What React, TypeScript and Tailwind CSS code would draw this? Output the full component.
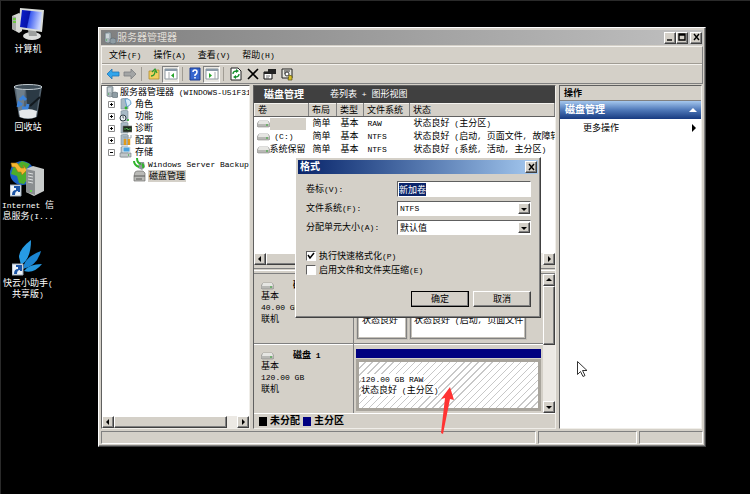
import type { ReactNode } from "react";

const raised =
  "border border-t-white border-l-white border-r-[#404040] border-b-[#404040] bg-[#d4d0c8] shadow-[inset_-1px_-1px_0_#808080]";
const sunken =
  "border border-t-[#606060] border-l-[#606060] border-r-[#f0eee9] border-b-[#f0eee9]";

function Mono({ children }: { children: ReactNode }) {
  return <span className="font-['Liberation_Mono','Noto_Sans_CJK_SC',monospace] text-[8px]">{children}</span>;
}

// Latin runs are set in the narrower mono face, Chinese runs keep the page font
function Mixed({ text }: { text: string }) {
  return text
    .split(/([\x20-\x7e]+)/)
    .filter(Boolean)
    .map((part, i) => (/^[\x20-\x7e]/.test(part) ? <Mono key={i}>{part}</Mono> : part));
}

function ComputerIcon() {
  return (
    <svg width="36" height="34" viewBox="0 0 36 34">
      <defs>
        <linearGradient id="screen" x1="0" y1="0" x2="1" y2="0.2">
          <stop offset="0" stopColor="#0a1fd0" />
          <stop offset="0.45" stopColor="#0714a8" />
          <stop offset="0.5" stopColor="#3c5cf0" />
          <stop offset="1" stopColor="#c8d4ff" />
        </linearGradient>
      </defs>
      <path d="M2 8l7-3 3 2v16l-3 2-7-4z" fill="#d8dad6" />
      <path d="M2 8l4 1v14l-4-2z" fill="#a8aaa8" />
      <path d="M3 11h3M3 14h3" stroke="#59d020" strokeWidth="1.5" />
      <ellipse cx="22" cy="28" rx="9" ry="4" fill="#dcdedc" />
      <path d="M18 22h8l1 6h-8z" fill="#9da09e" />
      <path d="M10 0l24 2-2 22-23-3z" fill="#d9dcd8" />
      <path d="M12 2l20 2-2 18-20-3z" fill="url(#screen)" />
    </svg>
  );
}

function BinIcon() {
  return (
    <svg width="30" height="36" viewBox="0 0 30 36">
      <path d="M1 3h28l-5 30q-9 4-18 0z" fill="#53626e" />
      <path d="M3 5h9L10 32l-4-1z" fill="#8b9ba8" opacity="0.5" />
      <path d="M13 5h14l-4 26-8 2z" fill="#2b3a45" />
      <path d="M6 27q8-4 18 0l-1 6q-8 3-16 0z" fill="#e5e8ea" />
      <ellipse cx="15" cy="3" rx="14" ry="2.5" fill="#3d4c57" stroke="#c4cdd2" />
      <path d="M7 16l3-3 3 3M5 23l1-4 3 2M9 24h5l1-4" fill="none" stroke="#3c83da" strokeWidth="3" />
      <path d="M17 22l10-9" stroke="#12191e" strokeWidth="2" />
    </svg>
  );
}

function ShortcutBadge({ y }: { y: number }) {
  return (
    <g transform={`translate(0 ${y})`}>
      <path d="M0 0h11v11H0z" fill="#edf3fa" stroke="#9aa8b8" />
      <path d="M2 10q0-5 4-5V3H4V1h6v6H8V6q-3 0-3 4z" fill="#1c55a7" />
    </g>
  );
}

function InternetIcon() {
  return (
    <svg width="36" height="38" viewBox="0 0 36 38">
      <circle cx="12" cy="13" r="12" fill="#1c61c4" />
      <path d="M3 8l9-7 8 3-4 6 4 5-6 9-5-1-2-7-6-2z" fill="#4cae2b" />
      <path d="M1 3h6l4 5h3l-1-3 4 5-5 5-1-3H8L5 7H2z" fill="#f5b62f" stroke="#a47215" strokeWidth="0.6" />
      <path d="M16 9l7-3 11 3v22l-10 5-8-4z" fill="#c8cbca" />
      <path d="M16 9l9 2v24l-9-3z" fill="#8a8e90" />
      <path d="M18 13l5 1M18 16l5 1M18 19l5 1M18 22l5 1" stroke="#dadddd" />
      <circle cx="21" cy="31" r="1" fill="#5ce33a" />
      <ShortcutBadge y={25} />
    </svg>
  );
}

function CloudHelperIcon() {
  return (
    <svg width="32" height="36" viewBox="0 0 32 36">
      <path d="M19 0Q7 9 7 17l2 8q10-6 10-25z" fill="#279be4" />
      <path d="M29 11Q12 17 11 29q14-3 18-18z" fill="#1b85d2" />
      <path d="M30 24q-13 0-18 7 10 3 18-7z" fill="#2698df" />
      <ShortcutBadge y={24} />
    </svg>
  );
}

function ServerIcon() {
  return (
    <svg width="12" height="12" viewBox="0 0 12 12" className="shrink-0">
      <path d="M1 1l4-1 2 1v9l-3 1-3-1z" fill="#a9b5bb" stroke="#65737a" strokeWidth="0.6" />
      <path d="M2 3h3M2 5h3" stroke="#eef3f5" />
      <path d="M6 7l3-1 3 1v4l-3 1-3-1z" fill="#8e9ca4" stroke="#5b6870" strokeWidth="0.6" />
      <path d="M2 8h1" stroke="#38b838" />
    </svg>
  );
}

function TreeIcon({ kind }: { kind: string }) {
  return (
    <svg width="13" height="12" viewBox="0 0 13 12" className="shrink-0">
      {kind !== "disk" && kind !== "backup" && (
        <path d="M2 1l5-1 2 1v10H2z" fill="#a8bac6" stroke="#7b8a94" strokeWidth="0.6" />
      )}
      {kind === "role" && (
        <>
          <path d="M6 1q6-1 6 5l-4 3z" fill="#d8ebf8" stroke="#4a8fc4" strokeWidth="0.8" />
          <circle cx="7" cy="10" r="1.4" fill="#2fb52f" />
        </>
      )}
      {kind === "feature" && (
        <>
          <circle cx="4" cy="8" r="3" fill="#e9eef2" stroke="#303c44" />
          <path d="M4 6v2h1" stroke="#303c44" fill="none" strokeWidth="0.7" />
          <circle cx="9" cy="10" r="1" fill="#2fb52f" />
        </>
      )}
      {kind === "diag" && (
        <>
          <path d="M4 4h9v6H4z" fill="#1e2b1e" stroke="#777" strokeWidth="0.6" />
          <path d="M5 7h2l1-1 1 2 1-1h2" fill="none" stroke="#5dd55d" strokeWidth="0.7" />
        </>
      )}
      {kind === "config" && (
        <>
          <path d="M6 5v6M10 5v6" stroke="#e39a18" strokeWidth="2.4" />
          <path d="M5 2v2h2V2M9 1v3h3V1" fill="none" stroke="#9aa4aa" />
        </>
      )}
      {kind === "storage" && (
        <>
          <path d="M4 1h7v5H4z" fill="#49a1dd" stroke="#dfe6ea" />
          <path d="M1 7h11v4H1z" fill="#c1c7ca" stroke="#747d82" strokeWidth="0.6" />
          <path d="M9 9h1" stroke="#21a421" />
        </>
      )}
      {kind === "backup" && (
        <>
          <path d="M6 4h5l1 5-3 3-4-2z" fill="#8f9799" />
          <path d="M1 3q0 4 5 6M4 0q0 5 4 6M9 6q2 1 1 4" fill="none" stroke="#30b52b" strokeWidth="2" />
        </>
      )}
      {kind === "disk" && (
        <>
          <path d="M2 2l2-1h6l2 2v8H1V6z" fill="#b9b9b6" stroke="#70706e" strokeWidth="0.7" />
          <path d="M1 6h11M3 9h6" stroke="#5d5d5b" />
        </>
      )}
    </svg>
  );
}

function DriveIcon() {
  return (
    <svg width="13" height="8" viewBox="0 0 13 8" className="inline-block shrink-0">
      <path d="M2 1h9l2 3v2l-1 1H1L0 6V4z" fill="#b8b8b5" stroke="#8a8a88" strokeWidth="0.6" />
      <path d="M2 1h9l1 3H1z" fill="#e6e6e3" />
      <path d="M9 5h2" stroke="#2da52d" />
    </svg>
  );
}

function DesktopIcon({ icon, children }: { icon: ReactNode; children: ReactNode }) {
  return (
    <a href="#" className="flex h-[78px] w-[54px] flex-col items-center text-center leading-[10px] text-white">
      <span className="flex h-[35px] items-end">{icon}</span>
      <span className="mt-[2px] whitespace-nowrap">{children}</span>
    </a>
  );
}

function ToolButton({ label, pressed, children }: { label: string; pressed?: boolean; children: ReactNode }) {
  return (
    <button
      aria-label={label}
      className={
        pressed
          ? "flex h-[17px] w-[17px] items-center justify-center border border-t-[#808080] border-l-[#808080] border-r-white border-b-white bg-[#eae8e3]"
          : "flex h-[17px] w-[17px] items-center justify-center"
      }
    >
      <svg width="14" height="14" viewBox="0 0 14 14">{children}</svg>
    </button>
  );
}

function Separator() {
  return <span className="mx-[3px] h-3.5 w-px bg-[#a09c94]" />;
}

function Toolbar() {
  return (
    <div className="flex h-[19px] items-center border-t border-t-[#f4f2ee] pl-[2px]">
      <ToolButton label="后退">
        <path d="M1 7l5-5v3h7v4H6v3z" fill="#30a5ec" stroke="#2174b4" strokeWidth="0.8" />
      </ToolButton>
      <ToolButton label="前进">
        <path d="M13 7L8 2v3H1v4h7v3z" fill="#a3a5a5" stroke="#7c7f80" strokeWidth="0.8" />
      </ToolButton>
      <Separator />
      <ToolButton label="上一级">
        <path d="M2 4h4l1-1h5v9H2z" fill="#f1cf61" stroke="#b18d2d" strokeWidth="0.8" />
        <path d="M4 9q4 0 4-5M5 5l3-3 2 4" fill="none" stroke="#2d9a30" strokeWidth="1.3" />
      </ToolButton>
      <ToolButton label="显示控制台树" pressed>
        <path d="M1 2h12v10H1z" fill="#fff" stroke="#8d98a0" />
        <path d="M1 3h12" stroke="#8999a8" strokeWidth="2" />
        <path d="M5 5v7" stroke="#a6acaf" />
        <path d="M10 6v5L7 8.5z" fill="#27a52b" />
      </ToolButton>
      <Separator />
      <ToolButton label="帮助">
        <path d="M2 1h10v12H2z" fill="#3566cf" stroke="#1e3d8f" />
        <path d="M5 5q0-2 2-2t2 2-2 3v1M7 10v1.5" fill="none" stroke="#fff" strokeWidth="1.5" />
      </ToolButton>
      <ToolButton label="显示操作窗格" pressed>
        <path d="M1 2h12v10H1z" fill="#fff" stroke="#8d98a0" />
        <path d="M1 3h12" stroke="#8999a8" strokeWidth="2" />
        <path d="M10 5v7" stroke="#a6acaf" />
        <path d="M4 6v5l3-2.5z" fill="#27a52b" />
      </ToolButton>
      <Separator />
      <ToolButton label="刷新">
        <path d="M2 1h7l3 3v9H2z" fill="#fff" stroke="#222" />
        <path d="M4 7q0-3 4-3M10 7q0 3-4 3" fill="none" stroke="#138d2b" strokeWidth="1.3" />
        <path d="M7 2l3 2-3 2zM7 8l-3 2 3 2z" fill="#138d2b" />
      </ToolButton>
      <ToolButton label="删除">
        <path d="M2 2l10 10M12 2L2 12" stroke="#000" strokeWidth="1.6" />
      </ToolButton>
      <ToolButton label="属性">
        <path d="M1 5h8v7H1z" fill="#fff" stroke="#111" />
        <path d="M1 5h8v2H1zM5 2h8v5H9V5H5z" fill="#222" />
        <path d="M3 9h4M3 11h3" stroke="#555" strokeWidth="0.8" />
      </ToolButton>
      <ToolButton label="帮助主题">
        <path d="M2 2h10v9H2z" fill="#e7e7df" stroke="#222" />
        <path d="M4 4h6M4 6h2" stroke="#333" />
        <circle cx="7" cy="7" r="2" fill="#fff" stroke="#333" />
        <path d="M9 8l3 1v4H8z" fill="#d8be28" stroke="#57500e" strokeWidth="0.7" />
      </ToolButton>
    </div>
  );
}

const treeItems = [
  { kind: "role", label: "角色" },
  { kind: "feature", label: "功能" },
  { kind: "diag", label: "诊断" },
  { kind: "config", label: "配置" },
  { kind: "storage", label: "存储", open: true },
];

function TreePane() {
  return (
    <nav className={`flex w-[149px] shrink-0 flex-col overflow-hidden bg-white ${sunken}`}>
      <ul className="flex-1 whitespace-nowrap leading-[12px]">
        <li className="flex h-3 items-center gap-[2px] pl-1">
          <ServerIcon />
          <span>
            <Mixed text="服务器管理器 (WINDOWS-U51F31" />
          </span>
        </li>
        {treeItems.map((item) => (
          <li key={item.kind} className="flex h-3 items-center pl-[6px]">
            <svg width="7" height="7" viewBox="0 0 7 7" className="mr-1">
              <path d="M0.5 0.5h6v6h-6z" fill="#fff" stroke="#8c8c8c" />
              <path d={item.open ? "M2 3.5h3" : "M2 3.5h3M3.5 2v3"} stroke="#000" />
            </svg>
            <TreeIcon kind={item.kind} />
            <span className="ml-[3px]">{item.label}</span>
          </li>
        ))}
        <li className="flex h-3 items-center pl-[31px]">
          <TreeIcon kind="backup" />
          <span className="ml-[2px] leading-[12px]"><Mono>Windows Server Backup</Mono></span>
        </li>
        <li className="flex h-3 items-center pl-[31px]">
          <TreeIcon kind="disk" />
          <span className="ml-[2px] bg-[#d4d0c8] px-px">磁盘管理</span>
        </li>
      </ul>
      <div className="flex h-3 bg-[#ece9e4]">
        <ScrollButton dir="left" />
        <div className={`w-[113px] ${raised}`} />
        <span className="flex-1" />
        <ScrollButton dir="right" />
      </div>
    </nav>
  );
}

const arrows = {
  left: "M5 1v6L2 4z",
  right: "M3 1v6l3-3z",
  up: "M1 5h6L4 2z",
  down: "M1 3h6L4 6z",
};

function ScrollButton({ dir }: { dir: keyof typeof arrows }) {
  return (
    <button aria-label={dir} className={`flex h-3 w-3 shrink-0 items-center justify-center ${raised}`}>
      <svg width="8" height="8" viewBox="0 0 8 8"><path d={arrows[dir]} /></svg>
    </button>
  );
}

const volumes = [
  { name: "", fs: "RAW", status: "状态良好 (主分区)" },
  { name: " (C:)", fs: "NTFS", status: "状态良好 (启动, 页面文件, 故障转" },
  { name: "系统保留", fs: "NTFS", status: "状态良好 (系统, 活动, 主分区)" },
];

function VolumeList() {
  return (
    <div className="flex h-[162px] flex-col overflow-hidden bg-white">
      <div className="flex-1 overflow-hidden">
        <table className="w-full table-fixed border-collapse whitespace-nowrap text-left">
          <colgroup>
            <col className="w-[54px]" />
            <col className="w-[28px]" />
            <col className="w-[27px]" />
            <col className="w-[46px]" />
            <col />
          </colgroup>
          <thead>
            <tr className="h-[13px] bg-[#d4d0c8] leading-[11px]">
              {["卷", "布局", "类型", "文件系统", "状态"].map((h) => (
                <th key={h} className="border border-t-[#f4f2ee] border-l-[#f4f2ee] border-r-[#808080] border-b-[#606060] p-0 pl-[3px] font-normal">
                  {h}
                </th>
              ))}
            </tr>
          </thead>
          <tbody>
            {volumes.map((v) => (
              <tr key={v.status} className="h-[13px] leading-[13px]">
                <td className="p-0 pl-[2px]">
                  <div className="flex items-center whitespace-pre">
                    <DriveIcon />
                    {v.name ? <span><Mixed text={v.name} /></span> : <span className="h-3 w-9 bg-[#d4d0c8]" />}
                  </div>
                </td>
                <td className="p-0 pl-1">简单</td>
                <td className="p-0 pl-1">基本</td>
                <td className="p-0 pl-1"><Mono>{v.fs}</Mono></td>
                <td className="overflow-hidden p-0 pl-1"><Mixed text={v.status} /></td>
              </tr>
            ))}
          </tbody>
        </table>
      </div>
      <div className="flex h-3 bg-[#ece9e4]">
        <ScrollButton dir="left" />
        <div className={`w-[200px] ${raised}`} />
        <span className="flex-1" />
        <ScrollButton dir="right" />
      </div>
    </div>
  );
}

function DiskInfo({ index, size }: { index: number; size: string }) {
  return (
    <div className="flex w-[100px] shrink-0 flex-col border-r border-r-[#808080] pt-[6px] pl-[7px] leading-[11px]">
      <div className="flex items-center gap-[19px] font-bold">
        <DriveIcon />
        <span><Mixed text={`磁盘 ${index}`} /></span>
      </div>
      <span>基本</span>
      <Mono>{size}</Mono>
      <span className="mt-px">联机</span>
    </div>
  );
}

function DiskMap() {
  const partition =
    "overflow-hidden border-[3px] border-[#c4c0b8] bg-white pt-3 leading-[11px] whitespace-nowrap outline outline-[#808080] -outline-offset-2";
  return (
    <div className="flex min-h-0 flex-1 flex-col border-t border-t-[#808080]">
      <div className="flex min-h-0 flex-1">
        <div className="min-w-0 flex-1">
          <div className="flex h-[70px] border-b border-b-[#808080] shadow-[0_1px_0_#fff]">
            <DiskInfo index={0} size="40.00 GB" />
            <div className="flex min-w-0 flex-1 flex-col px-[2px] pt-1 pb-[3px]">
              <div className="mr-[14px] h-[9px] bg-[#000080]" />
              <div className="mr-[14px] flex flex-1 gap-px pt-[2px]">
                <div className={`w-[52px] shrink-0 pl-[3px] ${partition}`}>
                  <Mono>100 MB</Mono>
                  <br />
                  状态良好
                </div>
                <div className={`min-w-0 flex-1 pl-[2px] ${partition}`}>
                  <Mono>39.90 GB NTFS</Mono>
                  <br />
                  <Mixed text="状态良好 (启动, 页面文件" />
                </div>
              </div>
            </div>
          </div>
          <div className="flex h-[69px]">
            <DiskInfo index={1} size="120.00 GB" />
            <div className="relative flex min-w-0 flex-1 flex-col px-[2px] pt-[5px] pb-[2px]">
              <div className="h-[9px] bg-[#000080]" />
              <div className="mt-px flex flex-1 flex-col items-start justify-center border-[3px] border-[#a8a49c] bg-[repeating-linear-gradient(135deg,#fff_0_4px,#c8c8c8_4px_5px)] pl-[2px] leading-[10px]">
                <span className="bg-white"><Mono>120.00 GB RAW</Mono></span>
                <span className="bg-white"><Mixed text="状态良好 (主分区)" /></span>
              </div>
              <svg width="14" height="48" viewBox="0 0 14 48" className="absolute top-[43px] left-[86px]">
                <path d="M10 0l4 13-4-1-7 35-2-1 4-35-4 1z" fill="#ff3333" />
              </svg>
            </div>
          </div>
        </div>
        <div className="flex w-3 shrink-0 flex-col bg-[#ece9e4]">
          <ScrollButton dir="up" />
          <div className={`h-[59px] ${raised}`} />
          <span className="flex-1" />
          <ScrollButton dir="down" />
        </div>
      </div>
      <div className="flex h-[15px] items-center gap-[3px] border-t border-t-white pl-[5px] text-[10px] font-bold">
        <span className="h-[9px] w-2 bg-black" />
        未分配
        <span className="h-[9px] w-2 bg-[#000080]" />
        主分区
      </div>
    </div>
  );
}

function FormatDialog() {
  const select = "block h-[15px] w-full appearance-none border border-t-[#606060] border-l-[#606060] border-r-white border-b-white bg-white pl-[2px] leading-[12px] outline-none";
  const fields = [
    { id: "fs", label: "文件系统(F):", value: "NTFS" },
    { id: "unit", label: "分配单元大小(A):", value: "默认值" },
  ];
  return (
    <form
      role="dialog"
      aria-labelledby="format-title"
      className={`absolute top-[129px] left-[196px] w-[246px] p-[2px] pb-[10px] ${raised}`}
    >
      <div className="flex h-[14px] items-center justify-between bg-linear-to-r from-[#0a246a] to-[#a6caf0] pr-px pl-[2px]">
        <h2 id="format-title" className="text-[10px] leading-[14px] font-bold text-white">格式</h2>
        <WindowButton label="关闭" path="M2 1l5 6M7 1L2 7" />
      </div>
      <div className="mr-[7px] ml-2 grid grid-cols-[91px_1fr] items-center gap-y-1 pt-[7px]">
        <label htmlFor="volume"><Mixed text="卷标(V):" /></label>
        <input
          id="volume"
          autoFocus
          defaultValue="新加卷"
          onFocus={(e) => e.target.select()}
          className="h-4 w-full border border-t-[#606060] border-l-[#606060] border-r-white border-b-white bg-white pl-px outline-none selection:bg-[#0a246a] selection:text-white"
        />
        {fields.map((f) => (
          <div key={f.id} className="contents">
            <label htmlFor={f.id}><Mixed text={f.label} /></label>
            <div className="relative">
              <select id={f.id} className={f.value === "NTFS" ? `${select} font-['Liberation_Mono',monospace] text-[8px]` : select}>
                <option>{f.value}</option>
              </select>
              <span className={`pointer-events-none absolute top-[2px] right-px flex h-[11px] w-3 items-center justify-center ${raised}`}>
                <svg width="8" height="8" viewBox="0 0 8 8"><path d={arrows.down} /></svg>
              </span>
            </div>
          </div>
        ))}
      </div>
      <div className="mt-[14px] ml-2 flex flex-col">
        <Check label="执行快速格式化(P)" checked />
        <Check label="启用文件和文件夹压缩(E)" />
      </div>
      <div className="mt-[14px] mr-[7px] flex justify-end gap-1">
        <button type="button" className={`h-4 w-[58px] outline outline-black -outline-offset-1 ${raised}`}>确定</button>
        <button type="button" className={`h-4 w-[58px] ${raised}`}>取消</button>
      </div>
    </form>
  );
}

function Check({ label, checked }: { label: string; checked?: boolean }) {
  return (
    <label className="flex h-[14px] items-center gap-[3px]">
      <span className="relative flex h-[10px] w-[10px]">
        <input
          type="checkbox"
          defaultChecked={checked}
          className="peer h-[10px] w-[10px] appearance-none border border-t-[#606060] border-l-[#606060] border-r-white border-b-white bg-white"
        />
        <svg width="10" height="10" viewBox="0 0 10 10" className="pointer-events-none absolute hidden peer-checked:block">
          <path d="M2 4l2 3 4-5" fill="none" stroke="#000" strokeWidth="1.5" />
        </svg>
      </span>
      <span><Mixed text={label} /></span>
    </label>
  );
}

function WindowButton({ label, path }: { label: string; path: string }) {
  return (
    <button type="button" aria-label={label} className={`flex h-3 w-3 items-center justify-center ${raised}`}>
      <svg width="9" height="9" viewBox="0 0 9 9"><path d={path} fill="none" stroke="#000" strokeWidth="1.4" /></svg>
    </button>
  );
}

const menus = ["文件(F)", "操作(A)", "查看(V)", "帮助(H)"];

function ServerManager() {
  return (
    <main className={`relative flex min-w-0 flex-1 flex-col p-[2px] ${raised}`}>
      <header className="flex h-[15px] shrink-0 items-center bg-linear-to-r from-[#808080] to-[#c0c0c0] pr-px pl-[3px]">
        <ServerIcon />
        <h1 className="ml-px flex-1 text-[10px] leading-[15px] text-[#e0ddd6]">服务器管理器</h1>
        <WindowButton label="最小化" path="M1 7h5" />
        <WindowButton label="最大化" path="M1 1h6v6H1zM1 2h6" />
        <span className="w-[2px]" />
        <WindowButton label="关闭" path="M2 1l5 6M7 1L2 7" />
      </header>
      <div className="mt-px border border-t-[#f4f2ee] border-l-[#f4f2ee] border-r-[#808080] border-b-[#808080]">
        <nav className="flex h-[17px] items-center gap-3 border-b border-b-[#a09c94] pl-[7px]">
          {menus.map((name) => (
            <button key={name} className="leading-[12px]"><Mixed text={name} /></button>
          ))}
        </nav>
        <Toolbar />
      </div>
      <div className="flex min-h-0 flex-1 gap-[3px] pt-px pr-px">
        <TreePane />
        <section className={`flex min-w-0 flex-1 flex-col ${sunken}`}>
          <div className="flex h-[17px] shrink-0 items-center gap-[26px] bg-[#404040] pl-[10px] text-white">
            <h2 className="text-[10px] font-bold">磁盘管理</h2>
            <span><Mixed text="卷列表 + 图形视图" /></span>
          </div>
          <VolumeList />
          <div className="flex h-2 shrink-0 flex-col justify-center">
            <div className="h-[3px] border-y border-t-[#808080] border-b-white" />
          </div>
          <DiskMap />
        </section>
        <aside className={`w-[143px] shrink-0 bg-white ${sunken}`}>
          <h2 className="h-[15px] border-b border-b-[#808080] bg-[#d4d0c8] pl-1 leading-[14px] font-bold">操作</h2>
          <div className="flex h-[18px] items-center justify-between bg-linear-to-b from-[#a6c8ee] via-[#4f78b8] to-[#173a80] pr-1 pl-[5px] text-[10px] font-bold text-white">
            磁盘管理
            <svg width="8" height="8" viewBox="0 0 8 8"><path d="M0 6h8L4 2z" fill="#fff" /></svg>
          </div>
          <button className="flex h-[18px] w-full items-center justify-between pr-[5px] pl-[23px]">
            更多操作
            <svg width="4" height="8" viewBox="0 0 4 8"><path d="M0 0v8l4-4z" /></svg>
          </button>
        </aside>
      </div>
      <footer className="flex h-[15px] shrink-0 gap-[2px] pt-[2px]">
        <span className="flex-1 border border-t-[#808080] border-l-[#808080] border-r-white border-b-white" />
        <span className="w-[99px] border border-t-[#808080] border-l-[#808080] border-r-white border-b-white" />
        <span className="w-[64px] border border-t-[#808080] border-l-[#808080] border-r-white border-b-white" />
      </footer>
      <FormatDialog />
      <svg width="11" height="17" viewBox="0 0 11 17" className="absolute top-[333px] left-[478px]">
        <path d="M0.5 0.5v13l3-3 2.5 5 2-1-2.5-5H10z" fill="#fff" stroke="#333" />
      </svg>
    </main>
  );
}

export default function App() {
  return (
    <div
      lang="zh-CN"
      className="flex min-h-screen border-t border-l border-[#2a2a2a] bg-black pt-[26px] pr-11 pb-12 font-['Liberation_Sans','Noto_Sans_CJK_SC',sans-serif] text-[9px] leading-[12px] text-black select-none"
    >
      <div className="-mt-5 flex w-[97px] shrink-0 flex-col">
        <DesktopIcon icon={<ComputerIcon />}>计算机</DesktopIcon>
        <DesktopIcon icon={<BinIcon />}>回收站</DesktopIcon>
        <DesktopIcon icon={<InternetIcon />}>
          <Mixed text="Internet 信" />
          <br />
          <Mixed text="息服务(I..." />
        </DesktopIcon>
        <DesktopIcon icon={<CloudHelperIcon />}>
          <Mixed text="快云小助手(" />
          <br />
          <Mixed text="共享版)" />
        </DesktopIcon>
      </div>
      <ServerManager />
    </div>
  );
}
